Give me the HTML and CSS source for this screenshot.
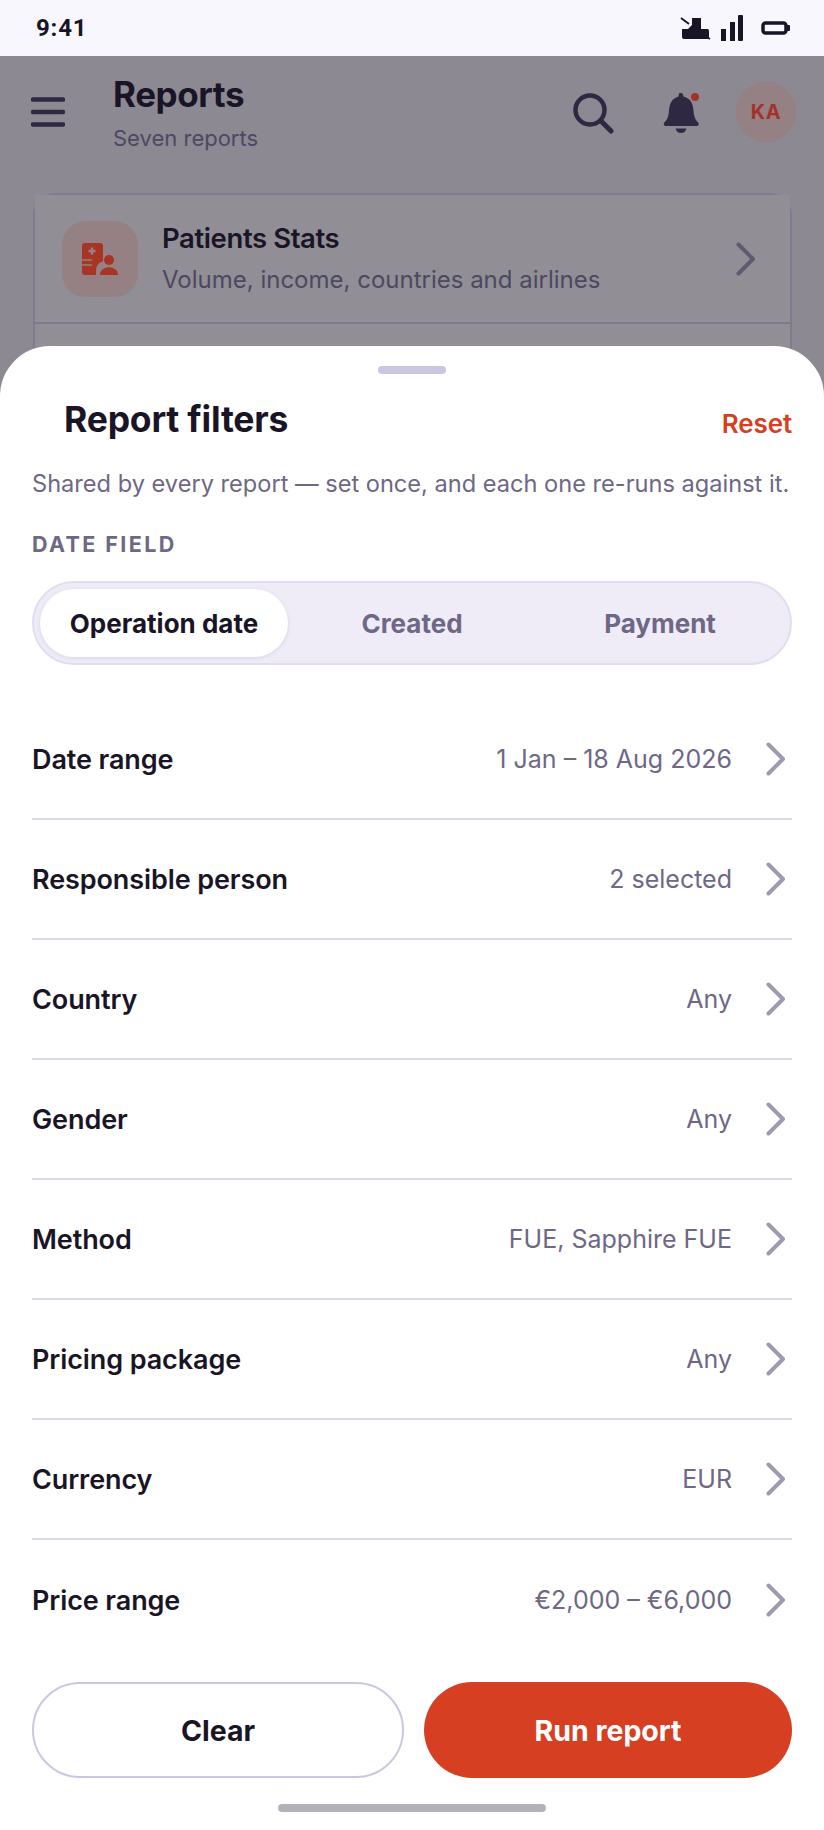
FILE: index.html
```html
<!DOCTYPE html>
<html lang="en">
	<head>
		<meta charset="utf-8">
		<title>Report filters</title>
		<link rel="stylesheet" href="styles.css">
	</head>
	<body>
		<div class="status">
			<span class="time">9:41</span>
			<div class="status-icons">
				<svg width="32" height="26" viewBox="0 0 32 26"><path d="M3 14h6l4-4V3h9v11h6.500q1.500 0 1.500 2v6q0 2-2 2H5q-2 0-2-2z" fill="#1a1526"/><path d="M2 3 10 9M26 21l5 3" stroke="#1a1526" stroke-width="2"/></svg>
				<svg width="22" height="26" viewBox="0 0 22 26"><rect x="0" y="14" width="5" height="12" fill="#1a1526"/><rect x="9" y="7" width="5" height="19" fill="#1a1526"/><rect x="17" y="0" width="5" height="26" rx="1" fill="#1a1526"/></svg>
				<svg class="battery" width="29" height="14" viewBox="0 0 29 14"><rect x="2" y="2" width="23" height="10" rx="2.500" fill="none" stroke="#1a1526" stroke-width="3.500"/><rect x="26" y="4" width="3" height="6" rx="1" fill="#1a1526"/></svg>
			</div>
		</div>

		<!-- dimmed page behind the sheet -->
		<div class="behind">
			<header class="topbar">
				<svg class="menu" width="34" height="30" viewBox="0 0 34 30"><path d="M2 2.500h30M2 15h30M2 27.500h30" stroke="#2e2842" stroke-width="4.500" stroke-linecap="round"/></svg>
				<div class="topbar-title">
					<h2>Reports</h2>
					<p>Seven reports</p>
				</div>
				<svg class="search" width="42" height="42" viewBox="0 0 42 42"><circle cx="18" cy="18" r="14.500" fill="none" stroke="#2e2842" stroke-width="4.500"/><path d="M29 29 39 39" stroke="#2e2842" stroke-width="5" stroke-linecap="round"/></svg>
				<svg class="bell" width="38" height="42" viewBox="0 0 38 42"><path d="M18 1q2 0 2.500 3.500C28 6.500 30 12 30.500 19c.5 6 2 9 5 12q1 2-1 3H2q-2-1-1-3c3-3 4.500-6 5-12C6.500 12 8.500 6.500 15.500 4.500 16 1 16 1 18 1z" fill="#2e2842"/><path d="M12.500 36.500h11Q22 41 18 41t-5.500-4.500z" fill="#2e2842"/><circle cx="32" cy="5" r="4" fill="#a3332a"/></svg>
				<div class="avatar">KA</div>
			</header>

			<div class="card">
				<div class="card-row">
					<div class="tile">
						<svg width="36" height="32" viewBox="0 0 36 32"><path d="M3 0h15q3 0 3 3v15q-5 2-6.500 6-.5 3-.5 8H3q-3 0-3-3V3q0-3 3-3z" fill="#a83424"/><path d="M10 4.500v7M6.500 8h7" stroke="#958083" stroke-width="2.600"/><path d="M0 17h10M0 22h10" stroke="#958083" stroke-width="1.600"/><circle cx="27" cy="17" r="5" fill="#a83424"/><path d="M18 32q0-7 9-8 9 1 9 8z" fill="#a83424"/></svg>
					</div>
					<div class="card-text">
						<h3>Patients Stats</h3>
						<p>Volume, income, countries and airlines</p>
					</div>
					<svg class="card-chevron" width="20" height="34" viewBox="0 0 20 34"><path d="M2.500 2.500 17 17 2.500 31.500" fill="none" stroke="#5f5a70" stroke-width="4" stroke-linecap="round" stroke-linejoin="round"/></svg>
				</div>
				<div class="card-rest"></div>
			</div>
		</div>

		<div class="sheet">
			<div class="handle"></div>
			<div class="sheet-head">
				<h1>Report filters</h1>
				<a class="reset">Reset</a>
			</div>
			<p class="hint">Shared by every report — set once, and each one re-runs against it.</p>
			<div class="section-label">DATE FIELD</div>
			<div class="segment">
				<div class="seg active">Operation date</div>
				<div class="seg">Created</div>
				<div class="seg">Payment</div>
			</div>

			<div class="rows">
				<div class="row"><span class="row-label">Date range</span><span class="row-value">1 Jan – 18 Aug 2026</span><svg class="chev" width="20" height="34" viewBox="0 0 20 34"><path d="M2.500 2.500 17 17 2.500 31.500" fill="none" stroke="#9e9ab0" stroke-width="4" stroke-linecap="round" stroke-linejoin="round"/></svg></div>
				<div class="row"><span class="row-label">Responsible person</span><span class="row-value">2 selected</span><svg class="chev" width="20" height="34" viewBox="0 0 20 34"><path d="M2.500 2.500 17 17 2.500 31.500" fill="none" stroke="#9e9ab0" stroke-width="4" stroke-linecap="round" stroke-linejoin="round"/></svg></div>
				<div class="row"><span class="row-label">Country</span><span class="row-value">Any</span><svg class="chev" width="20" height="34" viewBox="0 0 20 34"><path d="M2.500 2.500 17 17 2.500 31.500" fill="none" stroke="#9e9ab0" stroke-width="4" stroke-linecap="round" stroke-linejoin="round"/></svg></div>
				<div class="row"><span class="row-label">Gender</span><span class="row-value">Any</span><svg class="chev" width="20" height="34" viewBox="0 0 20 34"><path d="M2.500 2.500 17 17 2.500 31.500" fill="none" stroke="#9e9ab0" stroke-width="4" stroke-linecap="round" stroke-linejoin="round"/></svg></div>
				<div class="row"><span class="row-label">Method</span><span class="row-value">FUE, Sapphire FUE</span><svg class="chev" width="20" height="34" viewBox="0 0 20 34"><path d="M2.500 2.500 17 17 2.500 31.500" fill="none" stroke="#9e9ab0" stroke-width="4" stroke-linecap="round" stroke-linejoin="round"/></svg></div>
				<div class="row"><span class="row-label">Pricing package</span><span class="row-value">Any</span><svg class="chev" width="20" height="34" viewBox="0 0 20 34"><path d="M2.500 2.500 17 17 2.500 31.500" fill="none" stroke="#9e9ab0" stroke-width="4" stroke-linecap="round" stroke-linejoin="round"/></svg></div>
				<div class="row"><span class="row-label">Currency</span><span class="row-value">EUR</span><svg class="chev" width="20" height="34" viewBox="0 0 20 34"><path d="M2.500 2.500 17 17 2.500 31.500" fill="none" stroke="#9e9ab0" stroke-width="4" stroke-linecap="round" stroke-linejoin="round"/></svg></div>
				<div class="row"><span class="row-label">Price range</span><span class="row-value">€2,000 – €6,000</span><svg class="chev" width="20" height="34" viewBox="0 0 20 34"><path d="M2.500 2.500 17 17 2.500 31.500" fill="none" stroke="#9e9ab0" stroke-width="4" stroke-linecap="round" stroke-linejoin="round"/></svg></div>
			</div>

			<div class="actions">
				<div class="btn btn-clear">Clear</div>
				<div class="btn btn-run">Run report</div>
			</div>
			<div class="home-bar"></div>
		</div>
	</body>
</html>
```

FILE: styles.css
```css
* {
	box-sizing: border-box;
}
html, body {
	margin: 0;
	height: 1830px;
	overflow: hidden;
}
body {
	position: relative;
	font-family: Inter, "Noto Sans", sans-serif;
	color: #1a1526;
	background: #8c8993;
}
h1, h2, h3, p {
	margin: 0;
}

.status {
	height: 56px;
	background: #f9f7fe;
	display: flex;
	align-items: center;
	justify-content: space-between;
	padding: 0 34px 0 36px;
}
.time {
	font-family: Roboto, sans-serif;
	font-weight: 700;
	font-size: 24px;
	letter-spacing: 0.8px;
}
.status-icons {
	display: flex;
	align-items: center;
	gap: 10px;
}
.battery {
	margin-left: 8px;
}

.topbar {
	display: flex;
	align-items: flex-start;
	padding: 21px 28px 0 31px;
	height: 137px;
}
.menu {
	margin-top: 20px;
}
.topbar-title {
	margin-left: 48px;
	flex: 1;
}
.topbar-title h2 {
	font-size: 35px;
	font-weight: 700;
	line-height: 34px;
	letter-spacing: -0.4px;
}
.topbar-title p {
	font-size: 22px;
	line-height: 26px;
	margin-top: 14px;
	color: #4d4862;
}
.search {
	margin: 15px 2px 0 0;
}
.bell {
	margin: 15px 0 0 47px;
}
.avatar {
	width: 60px;
	height: 60px;
	border-radius: 50%;
	margin: 5px 0 0 35px;
	background: #958083;
	color: #a3332a;
	font-size: 20px;
	font-weight: 700;
	letter-spacing: 0.5px;
	display: flex;
	align-items: center;
	justify-content: center;
}

.card {
	margin: 0 32px 0 33px;
	height: 220px;
	border: 2px solid #7f7a8c;
	border-bottom: none;
	border-radius: 22px 22px 0 0;
}
.card-row {
	height: 129px;
	background: #918e95;
	border-bottom: 2px solid #7f7a8c;
	display: flex;
	align-items: center;
	padding: 0 34px 0 27px;
}
.card-rest {
	height: 89px;
	background: #918e95;
}
.tile {
	width: 76px;
	height: 76px;
	border-radius: 24px;
	background: #958083;
	display: flex;
	align-items: center;
	justify-content: center;
}
.card-text {
	flex: 1;
	margin-left: 24px;
}
.card-text h3 {
	font-size: 27.500px;
	font-weight: 600;
	line-height: 32px;
	letter-spacing: -0.4px;
}
.card-text p {
	font-size: 24px;
	line-height: 30px;
	margin-top: 11px;
	color: #4d4862;
}

/* bottom sheet over the page */
.sheet {
	position: absolute;
	left: 0;
	right: 0;
	top: 346px;
	bottom: 0;
	background: #fff;
	border-radius: 50px 50px 0 0;
	padding: 20px 32px 0;
}
.handle {
	width: 68px;
	height: 8px;
	border-radius: 4px;
	background: #cdc6e0;
	margin: 0 auto;
}
.sheet-head {
	display: flex;
	justify-content: space-between;
	align-items: flex-end;
	margin-top: 24px;
	padding-left: 32px;
}
.sheet-head h1 {
	font-size: 35.500px;
	font-weight: 700;
	line-height: 44px;
	letter-spacing: -0.2px;
}
.reset {
	color: #d63f21;
	font-size: 26px;
	font-weight: 600;
	line-height: 36px;
	letter-spacing: -0.1px;
}
.hint {
	font-size: 23.600px;
	line-height: 32px;
	margin-top: 26px;
	color: #6e6785;
	white-space: nowrap;
}
.section-label {
	font-size: 21.500px;
	font-weight: 700;
	line-height: 26px;
	letter-spacing: 2.4px;
	margin-top: 31px;
	color: #6e6785;
}
.segment {
	display: flex;
	height: 84px;
	margin-top: 24px;
	padding: 6px;
	background: #efecf8;
	border: 2px solid #e2deef;
	border-radius: 42px;
}
.seg {
	flex: 1;
	display: flex;
	align-items: center;
	justify-content: center;
	border-radius: 34px;
	font-size: 26px;
	font-weight: 700;
	color: #6e6785;
}
.seg.active {
	background: #fff;
	color: #1a1526;
	box-shadow: 0 1px 4px rgba(60, 50, 100, 0.12);
}

.rows {
	margin-top: 35px;
}
.row {
	height: 120px;
	display: flex;
	align-items: center;
	border-bottom: 2px solid #dcd9e8;
}
.row:last-child {
	border-bottom: none;
}
.row-label {
	flex: 1;
	font-size: 27px;
	font-weight: 600;
	letter-spacing: -0.1px;
}
.row-value {
	font-size: 25px;
	color: #6e6785;
}
.chev {
	margin: 0 6px 0 34px;
}

.actions {
	display: flex;
	gap: 20px;
	margin-top: 22px;
}
.btn {
	flex: 1;
	height: 96px;
	border-radius: 48px;
	display: flex;
	align-items: center;
	justify-content: center;
	font-size: 28.500px;
	font-weight: 700;
}
.btn-clear {
	background: #fff;
	border: 2px solid #cdc6e0;
}
.btn-run {
	background: #d63f21;
	color: #fff;
}
.home-bar {
	width: 268px;
	height: 8px;
	border-radius: 4px;
	background: #b3b1b7;
	margin: 26px auto 0;
}
```
